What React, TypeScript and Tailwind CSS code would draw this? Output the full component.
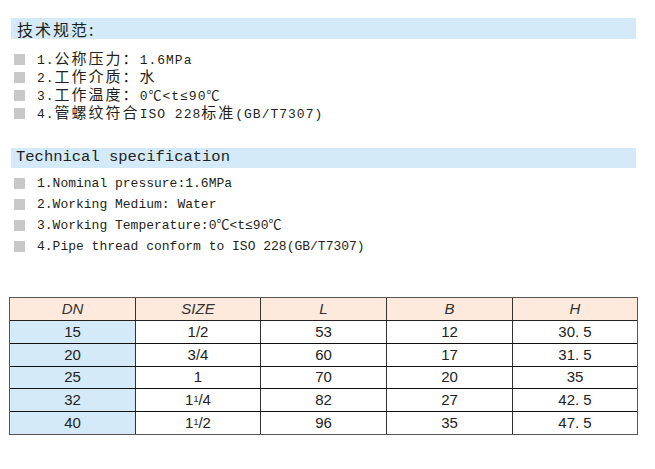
import React from 'react';

type Seg = { t: string; cjk?: boolean };

const cnItems: Seg[][] = [
  [{ t: '1.' }, { t: '公称压力：', cjk: true }, { t: '1.6MPa' }],
  [{ t: '2.' }, { t: '工作介质：水', cjk: true }],
  [{ t: '3.' }, { t: '工作温度：', cjk: true }, { t: '0℃<t≤90℃' }],
  [{ t: '4.' }, { t: '管螺纹符合', cjk: true }, { t: 'ISO 228' }, { t: '标准', cjk: true }, { t: '(GB/T7307)' }],
];

const enItems = [
  '1.Nominal pressure:1.6MPa',
  '2.Working Medium: Water',
  '3.Working Temperature:0℃<t≤90℃',
  '4.Pipe thread conform to ISO 228(GB/T7307)',
];

const headers = ['DN', 'SIZE', 'L', 'B', 'H'];

const rows: { dn: string; size: React.ReactNode; l: string; b: string; h: string; hh: number }[] = [
  { dn: '15', size: '1/2', l: '53', b: '12', h: '30. 5', hh: 23 },
  { dn: '20', size: '3/4', l: '60', b: '17', h: '31. 5', hh: 23 },
  { dn: '25', size: '1', l: '70', b: '20', h: '35', hh: 22 },
  { dn: '32', size: <>1<sup className="text-[9px] relative -top-[1px]">1</sup>/4</>, l: '82', b: '27', h: '42. 5', hh: 23 },
  { dn: '40', size: <>1<sup className="text-[9px] relative -top-[1px]">1</sup>/2</>, l: '96', b: '35', h: '47. 5', hh: 22 },
];

const widths = ['w-[126px]', 'w-[125px]', 'w-[126px]', 'w-[126px]', 'w-[124px]'];

const Square = () => <span className="w-[11px] h-[11px] bg-[#c8c8c8] shrink-0" />;

export default function App() {
  return (
    <div className="w-[655px] h-[469px] bg-white text-[#231f20] pt-[18px] font-['Liberation_Mono','Noto_Sans_CJK_SC',monospace]">
      {/* 技术规范 */}
      <div className="ml-[11px] w-[625px] h-[21px] bg-[#d4eaf9] flex items-center pl-[6px]">
        <span className="text-[16px] leading-none tracking-[2px] font-['Noto_Sans_CJK_SC',sans-serif]">技术规范:</span>
      </div>
      <div className="mt-[11px] flex flex-col">
        {cnItems.map((segs, i) => (
          <div key={i} className="h-[18px] flex items-center pl-[14px] gap-[12px]">
            <Square />
            <span className="whitespace-pre leading-[16px]">
              {segs.map((s, j) =>
                s.cjk ? (
                  <span key={j} className="text-[15px] leading-[16px] tracking-[2px] font-['Noto_Sans_CJK_SC',sans-serif]">{s.t}</span>
                ) : (
                  <span key={j} className="text-[13px] leading-[16px] tracking-[1px]">{s.t}</span>
                )
              )}
            </span>
          </div>
        ))}
      </div>

      {/* Technical specification */}
      <div className="mt-[26px] ml-[11px] w-[625px] h-[20px] bg-[#d4eaf9] flex items-center pl-[5px]">
        <span className="text-[15.5px] leading-none">Technical specification</span>
      </div>
      <div className="mt-[5px] flex flex-col">
        {enItems.map((t, i) => (
          <div key={i} className="h-[21px] flex items-center pl-[14px] gap-[12px]">
            <Square />
            <span className="text-[13px] leading-none whitespace-pre">{t}</span>
          </div>
        ))}
      </div>

      {/* table */}
      <div className="mt-[40px] ml-[9px] w-[629px] border border-[#555] font-['Liberation_Sans',Arial,sans-serif] text-[15px] text-[#222]">
        <div className="flex h-[23px] bg-[#fdeadd] border-b border-[#222]">
          {headers.map((h, i) => (
            <div
              key={h}
              className={`${widths[i]} flex items-center justify-center italic text-[#333] ${i < 4 ? 'border-r border-[#333]' : ''}`}
            >
              {h}
            </div>
          ))}
        </div>
        {rows.map((r, ri) => {
          const cells = [r.dn, r.size, r.l, r.b, r.h];
          return (
            <div
              key={ri}
              className={`flex ${ri < rows.length - 1 ? 'border-b border-[#111]' : ''}`}
              style={{ height: r.hh }}
            >
              {cells.map((c, i) => (
                <div
                  key={i}
                  className={`${widths[i]} flex items-center justify-center ${i === 0 ? 'bg-[#d4eaf9]' : ''} ${i < 4 ? 'border-r border-[#333]' : ''}`}
                >
                  {c}
                </div>
              ))}
            </div>
          );
        })}
      </div>
    </div>
  );
}
